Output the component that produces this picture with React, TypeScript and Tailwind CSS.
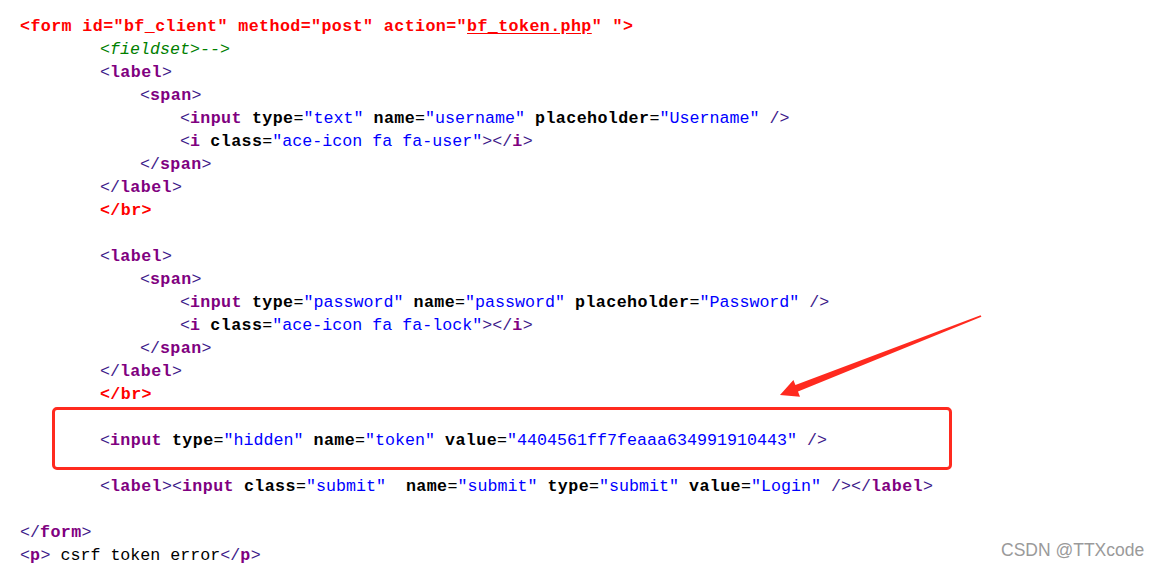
type Kind = "b" | "t" | "a" | "e" | "v" | "r" | "ru" | "g" | "n";
type Tok = [Kind, string];

// bold glyphs in the reference are a touch wider than the regular ones
const cls: Record<Kind, string> = {
  b: "text-[#3d1a8a]",
  t: "text-[#800080] font-bold tracking-[0.4px]",
  a: "text-black font-bold tracking-[0.4px]",
  e: "text-black",
  v: "text-[#0000ff]",
  r: "text-[#ff0000] font-bold tracking-[0.4px]",
  ru: "text-[#ff0000] font-bold tracking-[0.4px] underline underline-offset-2",
  g: "text-[#008000] italic",
  n: "text-black",
};

// helpers to keep the line table short
const open = (tag: string): Tok[] => [["b", "<"], ["t", tag]];
const attr = (name: string, value: string): Tok[] => [
  ["n", " "],
  ["a", name],
  ["e", "="],
  ["v", `"${value}"`],
];
const close = (tag: string): Tok[] => [["b", "</"], ["t", tag], ["b", ">"]];

// indent = number of leading spaces
const lines: { indent: number; toks: Tok[] }[] = [
  {
    indent: 0,
    toks: [
      ["r", '<form id="bf_client" method="post" action="'],
      ["ru", "bf_token.php"],
      ["r", '" ">'],
    ],
  },
  { indent: 8, toks: [["g", "<fieldset>-->"]] },
  { indent: 8, toks: [...open("label"), ["b", ">"]] },
  { indent: 12, toks: [...open("span"), ["b", ">"]] },
  {
    indent: 16,
    toks: [
      ...open("input"),
      ...attr("type", "text"),
      ...attr("name", "username"),
      ...attr("placeholder", "Username"),
      ["b", " />"],
    ],
  },
  {
    indent: 16,
    toks: [...open("i"), ...attr("class", "ace-icon fa fa-user"), ["b", ">"], ...close("i")],
  },
  { indent: 12, toks: close("span") },
  { indent: 8, toks: close("label") },
  { indent: 8, toks: [["r", "</br>"]] },
  { indent: 0, toks: [] },
  { indent: 8, toks: [...open("label"), ["b", ">"]] },
  { indent: 12, toks: [...open("span"), ["b", ">"]] },
  {
    indent: 16,
    toks: [
      ...open("input"),
      ...attr("type", "password"),
      ...attr("name", "password"),
      ...attr("placeholder", "Password"),
      ["b", " />"],
    ],
  },
  {
    indent: 16,
    toks: [...open("i"), ...attr("class", "ace-icon fa fa-lock"), ["b", ">"], ...close("i")],
  },
  { indent: 12, toks: close("span") },
  { indent: 8, toks: close("label") },
  { indent: 8, toks: [["r", "</br>"]] },
  { indent: 0, toks: [] },
  {
    indent: 8,
    toks: [
      ...open("input"),
      ...attr("type", "hidden"),
      ...attr("name", "token"),
      ...attr("value", "4404561ff7feaaa634991910443"),
      ["b", " />"],
    ],
  },
  { indent: 0, toks: [] },
  {
    indent: 8,
    toks: [
      ...open("label"),
      ["b", ">"],
      ...open("input"),
      ...attr("class", "submit"),
      ["n", " "],
      ...attr("name", "submit"),
      ...attr("type", "submit"),
      ...attr("value", "Login"),
      ["b", " />"],
      ...close("label"),
    ],
  },
  { indent: 0, toks: [] },
  { indent: 0, toks: close("form") },
  {
    indent: 0,
    toks: [...open("p"), ["b", ">"], ["n", " csrf token error"], ...close("p")],
  },
];

export default function App() {
  return (
    <div className="relative w-[1161px] h-[567px] overflow-hidden bg-white">
      <div className="flex flex-col pt-[15px] pl-[20px] font-['Liberation_Mono','DejaVu_Sans_Mono',monospace] text-[16.67px] leading-[23px] whitespace-pre">
        {lines.map((line, i) => (
          <div key={i} className="h-[23px]">
            {" ".repeat(line.indent)}
            {line.toks.map(([k, s], j) => (
              <span key={j} className={cls[k]}>
                {s}
              </span>
            ))}
          </div>
        ))}
      </div>

      {/* annotation: red box round the hidden token */}
      <div className="absolute left-[52px] top-[407px] w-[900px] h-[63px] border-[3px] border-[#ff2a1f] rounded-[5px]" />

      {/* annotation: arrow */}
      <svg className="absolute left-0 top-0" width="1161" height="567" viewBox="0 0 1161 567">
        <polygon
          points="980.6,315.3 795.4,385.1 793.4,380 780,395 800,396.8 798,391.6 981.4,316.7"
          fill="#ff2a1f"
        />
      </svg>

      <div className="absolute left-[1001px] top-[539px] font-['Liberation_Sans',Arial,sans-serif] text-[17.5px] leading-[22px] text-[#9a9a9a]">
        CSDN @TTXcode
      </div>
    </div>
  );
}
